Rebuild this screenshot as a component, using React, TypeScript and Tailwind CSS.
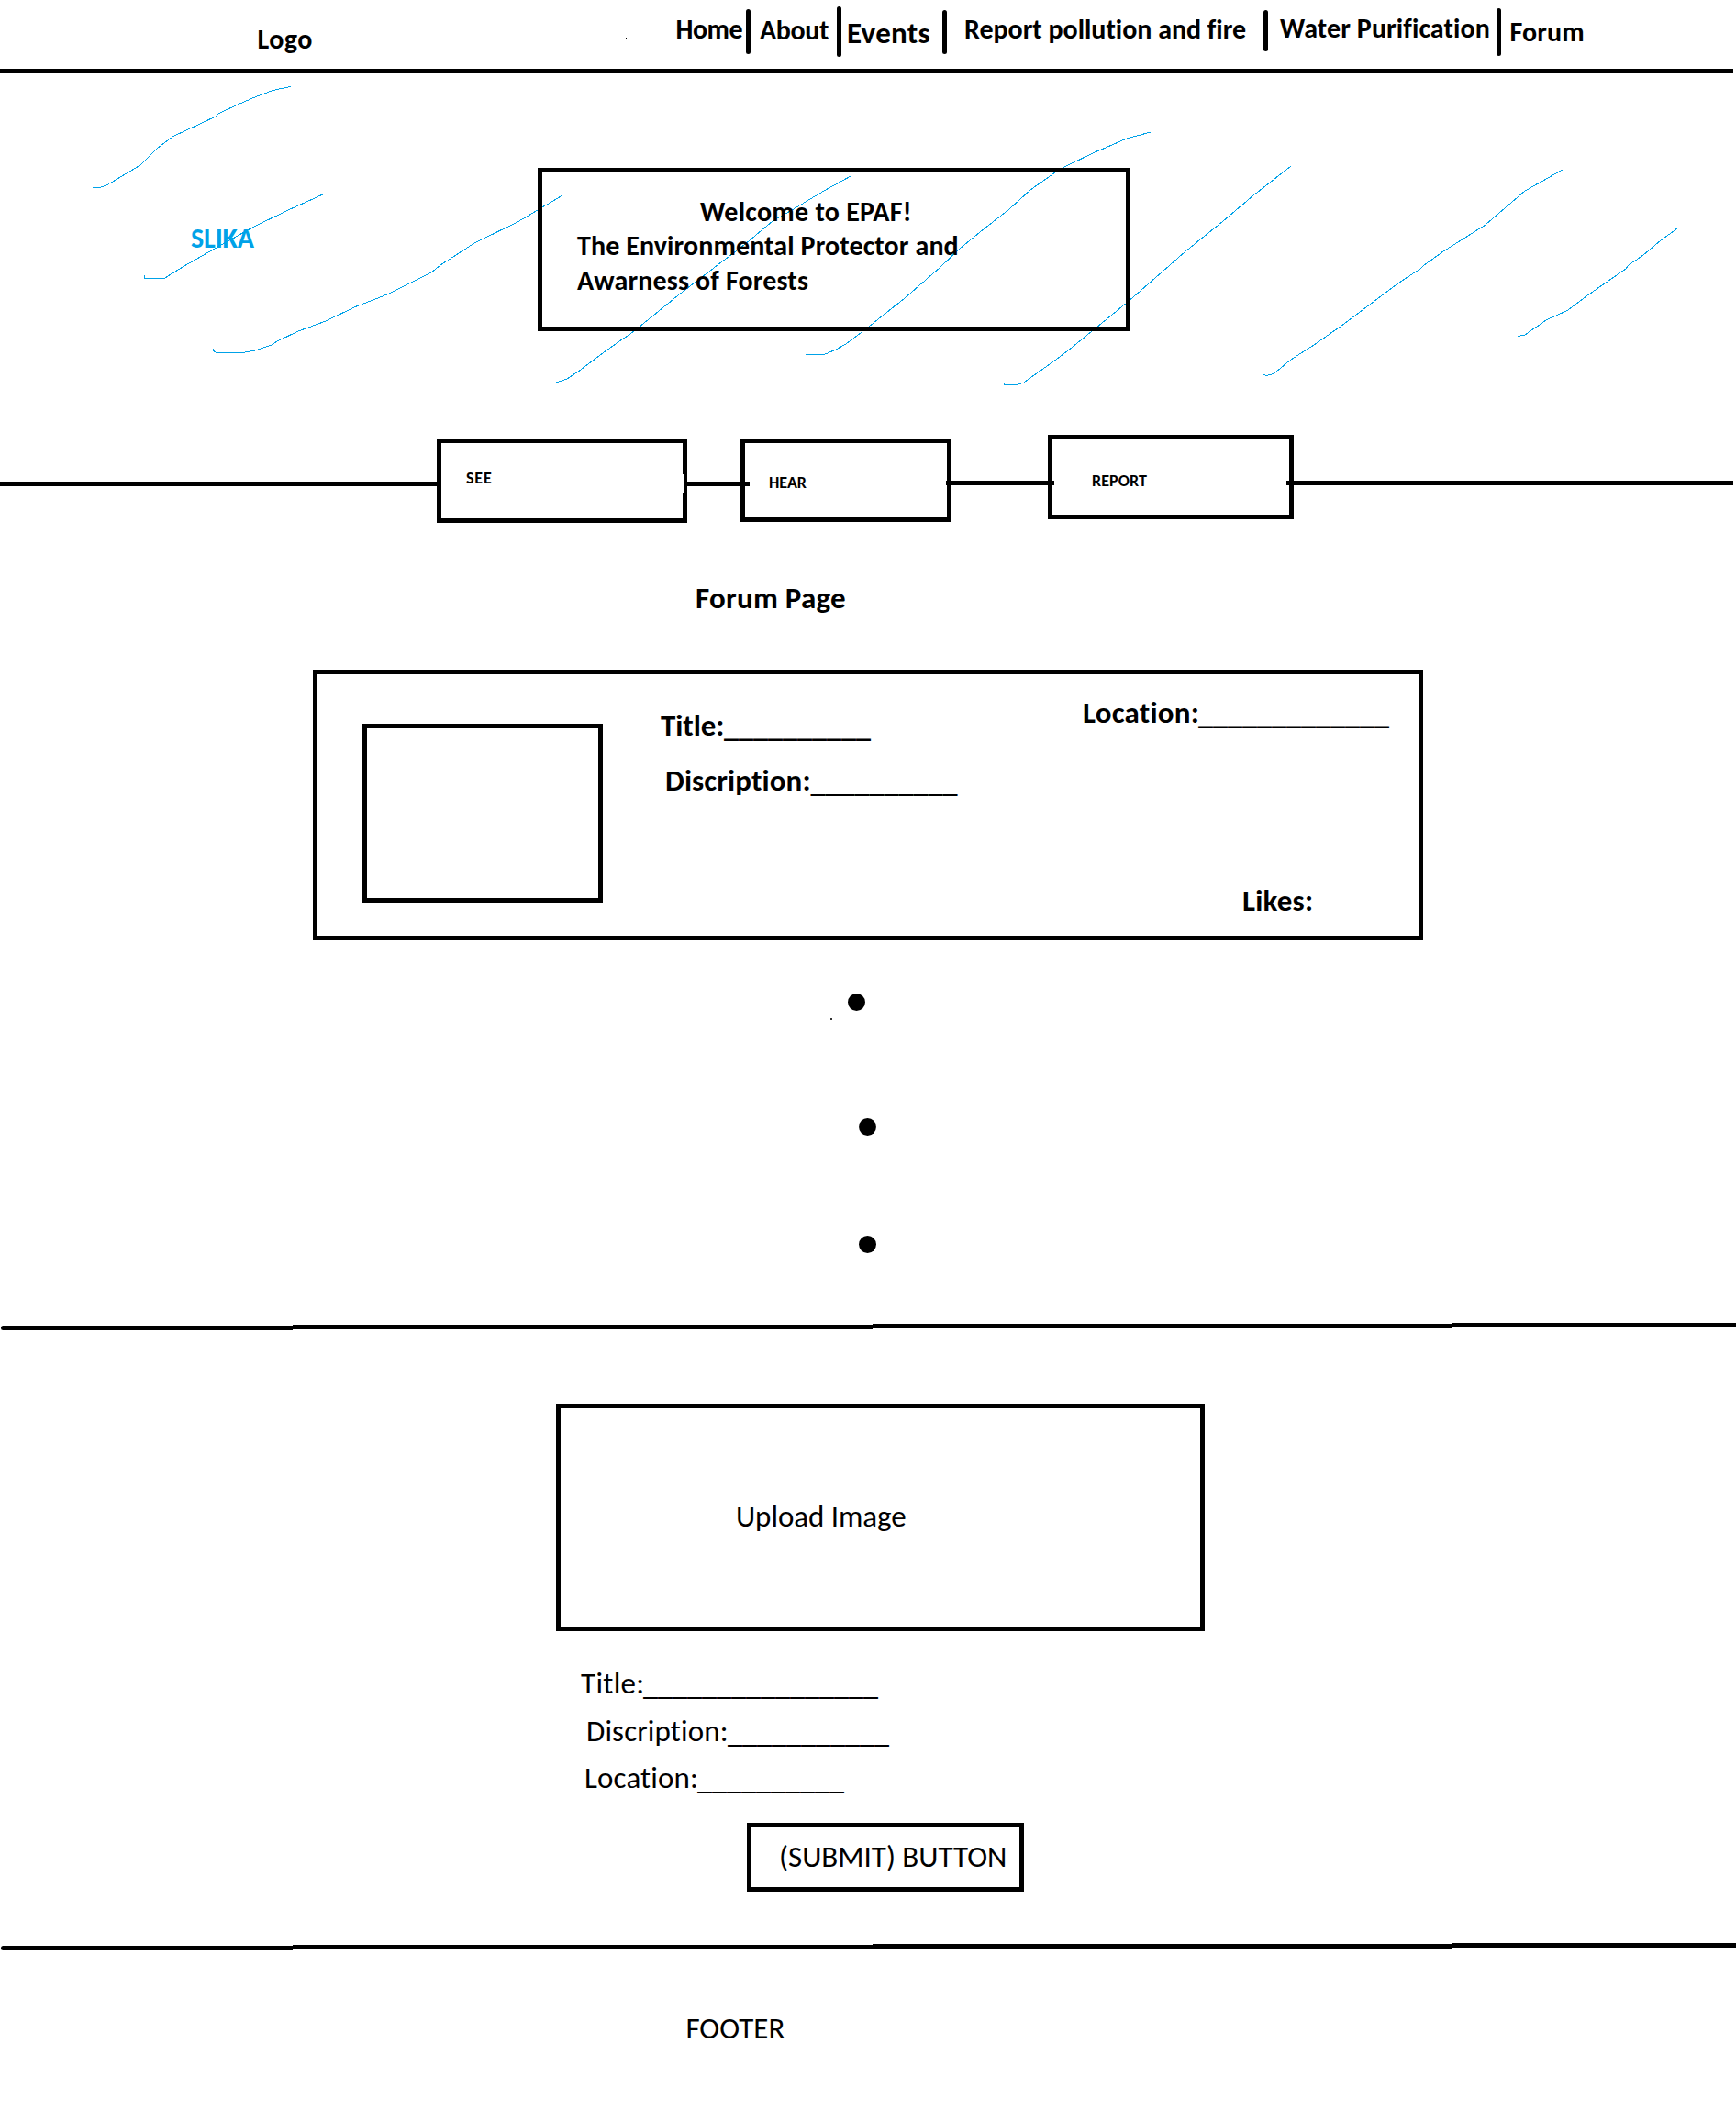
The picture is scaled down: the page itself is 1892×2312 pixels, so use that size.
import type { ReactNode } from "react";

const strokes: string[] = [
  "101,204.5 109,204.5 116,202 153,180 171,162 188,149 235,127 238,124 259,114 280,105 296,99 306,96.5 317,94.5",
  "157.5,300 157.5,303.5 179,303.5 199,291 241,267 277,247 314,229 354,211",
  "232.5,380 232.5,382.5 236,384.5 264,384.5 276,382.5 296,376 302,372 325,361 355,350 386,335 422,321 470,297 480,289 517,265 564,242 612,213.5",
  "591,417.5 604.5,417.5 618,413 633,403 658,384 691,361 739,322 778,292 811,267 842,241 863,229 898,208 928,191.5",
  "878,386.5 898,386.5 909,382 922,375 939,362 947,356 986,325 1024,292 1046,271 1073,249 1100,228 1123,207 1150,188 1160,182 1191,167 1228,151 1254,144",
  "1094.5,418 1094.5,419.5 1108,419.5 1115,417.5 1151,392 1163,383 1190,361 1228,330 1251,310 1275,289 1292,274 1333,241 1366,213 1407,181",
  "1376.5,408 1380,409.5 1388,407.5 1407,392 1432,376 1465,353 1525,308 1548,293 1552,289 1573,274 1619,245 1662,208 1664,207 1703,185",
  "1654.5,366.5 1662,365 1685,349 1709,338 1733,320 1772,293 1775,289 1791,278 1810,262 1828,249",
];

function Scribbles() {
  return (
    <svg className="absolute left-0 top-0" width="1892" height="394" viewBox="0 80 1892 394" fill="none" stroke="#00a2e8" strokeWidth="1" shapeRendering="crispEdges">
      {strokes.map((points) => (
        <polyline key={points} points={points} />
      ))}
    </svg>
  );
}

function Separator({ className }: { className: string }) {
  return <span className={`w-[5px] shrink-0 rounded-full bg-black ${className}`} />;
}

type FieldProps = { label: ReactNode; blanks: number; className: string; blanksClass?: string };

function Field({ label, blanks, className, blanksClass = "mt-[2px]" }: FieldProps) {
  return (
    <div className={`flex items-start text-[33px] leading-[40px] ${className}`}>
      {label}
      <span className={`text-[32.13px] tracking-normal ${blanksClass}`}>{"_".repeat(blanks)}</span>
    </div>
  );
}

/* Divider drawn by hand: it climbs one pixel at each joint. */
function SteppedRule({ className }: { className: string }) {
  return (
    <div className={`flex h-[8px] items-end ${className}`}>
      <div className="ml-px h-[5px] w-[318px] rounded-l-sm bg-black" />
      <div className="mb-px h-[5px] w-[632px] bg-black" />
      <div className="mb-[2px] h-[5px] w-[632px] bg-black" />
      <div className="mb-[3px] h-[5px] w-[309px] bg-black" />
    </div>
  );
}

export default function App() {
  return (
    <div className="h-[2312px] w-[1892px] overflow-hidden bg-white font-[Calibri,Carlito,Lato,sans-serif] text-black [font-variant-ligatures:none]">
      <header className="h-[80px] w-[1889px] border-b-[5px] border-black">
        <nav className="flex items-start whitespace-nowrap text-[30px] font-bold leading-[40px]">
          <span className="ml-[280.5px] mt-[23px] w-[401.5px] shrink-0 tracking-[0.5px]">Logo</span>
          <span className="mt-[41px] h-[2px] w-px shrink-0 bg-black" />
          <span className="ml-[53.5px] mt-[12px] w-[76.5px] shrink-0 tracking-[-0.5px]">Home</span>
          <Separator className="mt-[10px] h-[49px]" />
          <span className="ml-[10px] mt-[13px] w-[84px] shrink-0 tracking-[-0.35px]">About</span>
          <Separator className="mt-[7px] h-[55px]" />
          <span className="ml-[6px] mt-[16px] w-[104px] shrink-0 text-[33px] tracking-[0.3px]">Events</span>
          <Separator className="mt-[11px] h-[48px]" />
          <span className="ml-[19px] mt-[12px] w-[326px] shrink-0 tracking-[-0.02px]">Report pollution and fire</span>
          <Separator className="mt-[11px] h-[45px]" />
          <span className="ml-[13px] mt-[11px] w-[236px] shrink-0 tracking-[0.1px]">Water Purification</span>
          <Separator className="mt-[9px] h-[52px]" />
          <span className="ml-[9.5px] mt-[15px] shrink-0 tracking-[0.1px]">Forum</span>
        </nav>
      </header>

      <section className="relative flex h-[394px] items-start text-[30px] font-bold leading-[40px]">
        <Scribbles />
        <div className="relative ml-[208px] mt-[160px] w-[378px] shrink-0 tracking-[-0.1px] text-[#00a2e8]">SLIKA</div>
        <div className="relative mt-[103px] flex h-[178px] w-[646px] flex-col whitespace-nowrap border-[5px] border-black pl-[38px] pt-[23px]">
          <h1 className="ml-[134px] h-[37px] tracking-[0.25px]">Welcome to EPAF!</h1>
          <p className="h-[38px] tracking-[0.11px]">The Environmental Protector and</p>
          <p className="tracking-[0.16px]">Awarness of Forests</p>
        </div>
      </section>

      <section className="flex h-[96px] items-start text-[18px] font-bold leading-[40px]">
        <div className="mt-[51px] h-[5px] w-[476px] shrink-0 bg-black" />
        <div className="mt-[4px] flex h-[92px] w-[273px] shrink-0 items-start justify-between border-[5px] border-black pl-[27px]">
          <span className="mt-[18px] tracking-[0.8px]">SEE</span>
          <span className="-mr-[2px] mt-[34px] h-[20px] w-[2px] bg-white" />
        </div>
        <div className="-mr-[10px] mt-[51px] h-[5px] w-[68px] shrink-0 bg-black" />
        <div className="mt-[4px] h-[91px] w-[230px] shrink-0 border-[5px] border-black pl-[26px] pt-[23px]">HEAR</div>
        <div className="-ml-[6px] -mr-[7px] mt-[50px] h-[5px] w-[118px] shrink-0 bg-black" />
        <div className="h-[92px] w-[268px] shrink-0 border-[5px] border-black pl-[43px] pt-[25px] tracking-[0.1px]">REPORT</div>
        <div className="-ml-[8px] mt-[50px] h-[5px] w-[487px] shrink-0 bg-black" />
      </section>

      <h2 className="ml-[758px] mt-[62px] h-[98px] text-[33px] font-bold leading-[40px] tracking-[0.26px]">Forum Page</h2>

      <article className="ml-[341px] flex h-[295px] w-[1210px] items-start whitespace-nowrap border-[5px] border-black font-bold">
        <div className="ml-[49px] mt-[54px] h-[195px] w-[262px] shrink-0 border-[5px] border-black" />
        <div className="ml-[63px] mt-[36px] w-[461px] shrink-0">
          <Field className="h-[60px]" blanks={10} blanksClass="mt-px" label={<span className="w-[69px] tracking-[-0.05px]">Title:</span>} />
          <Field className="ml-[5px]" blanks={10} blanksClass="mt-px" label={<span className="w-[158.5px] tracking-[0.1px]">Discription:</span>} />
        </div>
        <div className="-ml-px mt-[22px]">
          <Field className="h-[205px]" blanks={13} blanksClass="mt-px" label={<span className="w-[126px] tracking-[0.25px]">Location:</span>} />
          <div className="ml-[174px] text-[33px] leading-[40px] tracking-[0.25px]">Likes:</div>
        </div>
      </article>

      <div className="flex h-[419px] flex-col items-start">
        <span className="ml-[924px] mt-[58px] size-[19px] shrink-0 rounded-full bg-black" />
        <span className="ml-[905px] mt-[8px] size-[2px] shrink-0 bg-black/80" />
        <span className="ml-[936px] mt-[107px] size-[19px] shrink-0 rounded-full bg-black" />
        <span className="ml-[936px] mt-[109px] size-[19px] shrink-0 rounded-full bg-black" />
      </div>
      <SteppedRule className="-mt-[2px]" />

      <form className="mt-[80px] text-[33px] leading-[40px]">
        <div className="ml-[606px] h-[248px] w-[707px] border-[5px] border-black pl-[191px] pt-[98px] tracking-[-0.05px]">Upload Image</div>
        <Field className="ml-[633px] mt-[37px] h-[40px]" blanks={16} label={<span className="w-[68px] tracking-[0.32px]">Title:</span>} />
        <Field className="ml-[639px] mt-[12px] h-[40px]" blanks={11} label={<span className="w-[154px] tracking-[0.12px]">Discription:</span>} />
        <Field className="ml-[637px] mt-[11px] h-[40px]" blanks={10} label={<span className="w-[123px] tracking-[0.15px]">Location:</span>} />
        <button type="button" className="ml-[814px] mt-[29px] block h-[75px] w-[302px] whitespace-nowrap border-[5px] border-black pb-[2px] pl-[30px] text-left">
          (SUBMIT) BUTTON
        </button>
      </form>
      <SteppedRule className="mt-[56px]" />

      <footer className="ml-[747.5px] mt-[65px] text-[33px] leading-[40px]">FOOTER</footer>
    </div>
  );
}
